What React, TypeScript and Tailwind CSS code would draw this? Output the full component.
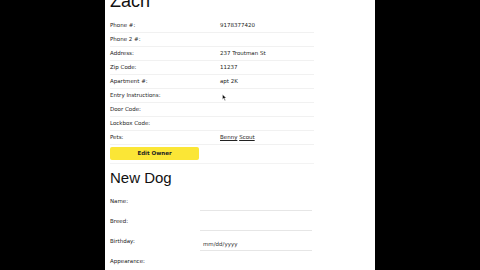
import React from "react";

const rows: [string, React.ReactNode][] = [
  ["Phone #:", "9178377420"],
  ["Phone 2 #:", ""],
  ["Address:", "237 Troutman St"],
  ["Zip Code:", "11237"],
  ["Apartment #:", "apt 2K"],
  ["Entry Instructions:", ""],
  ["Door Code:", ""],
  ["Lockbox Code:", ""],
  [
    "Pets:",
    <span>
      <span className="underline">Benny</span> <span className="underline">Scout</span>
    </span>,
  ],
];

const dogFields = ["Name:", "Breed:", "Birthday:", "Appearance:"];

export default function App() {
  return (
    <div className="w-[480px] h-[270px] bg-black flex overflow-hidden">
      <div className="relative ml-[105px] w-[270px] h-[270px] bg-white overflow-hidden pl-[5px] text-[#222]" style={{ fontFamily: "'DejaVu Sans', Verdana, sans-serif" }}>
        <div className="-mt-[9px] h-[28px] text-[18px] leading-[20px] text-[#111]" style={{ fontFamily: "'Liberation Sans', Arial, sans-serif" }}>
          Zach
        </div>
        <div className="w-[204px]">
          {rows.map(([label, value], i) => (
            <div key={i} className="flex h-[14px] items-center border-b border-[#f1f1f1] text-[5.5px]">
              <div className="w-[110px]">{label}</div>
              <div>{value}</div>
            </div>
          ))}
        </div>
        <div className="mt-[2px] w-[89px] h-[13px] rounded-[2px] bg-[#fbe636] flex items-center justify-center text-[5.5px] font-bold text-[#222]">
          Edit Owner
        </div>
        <div className="mt-[3px] w-[204px] border-b border-[#f3f3f3]"></div>
        <div className="mt-[5px] h-[20px] text-[15px] leading-[18px] text-[#111]" style={{ fontFamily: "'Liberation Sans', Arial, sans-serif" }}>
          New Dog
        </div>
        <div className="mt-[6px]">
          {dogFields.map((f, i) => (
            <div key={i} className="flex h-[20px] text-[5.5px]">
              <div className="w-[90px] pt-[2px]">{f}</div>
              <div className="w-[112px] h-[16px] border-b border-[#e6e6e6] flex items-end pb-[2px] pl-[3px] text-[#333]">
                {f === "Birthday:" ? "mm/dd/yyyy" : ""}
              </div>
            </div>
          ))}
        </div>
        <svg className="absolute left-[117px] top-[94px]" width="5" height="7" viewBox="0 0 10 14">
          <path d="M1 1 L1 11 L3.5 8.5 L5.5 13 L7 12.3 L5 8 L8.5 8 Z" fill="#111" stroke="#fff" strokeWidth="0.8" />
        </svg>
      </div>
    </div>
  );
}
